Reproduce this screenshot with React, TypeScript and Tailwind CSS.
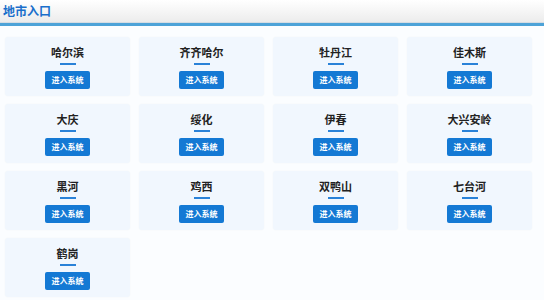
import React from "react";

const cities = [
  "哈尔滨", "齐齐哈尔", "牡丹江", "佳木斯",
  "大庆", "绥化", "伊春", "大兴安岭",
  "黑河", "鸡西", "双鸭山", "七台河",
  "鹤岗",
];

export default function App() {
  return (
    <div
      className="w-[544px] h-[300px] bg-white overflow-hidden"
      style={{ fontFamily: '"Noto Sans CJK SC", "Noto Sans", sans-serif' }}
    >
      <div className="h-[22px] bg-gradient-to-b from-white to-[#ececec] flex items-center px-[3px] pb-[1px]">
        <span className="text-[12px] font-bold text-[#1a6fcb] leading-none">地市入口</span>
      </div>
      <div className="h-[1px] bg-[#d6dde3]" />
      <div className="h-[3px] bg-[#4da3d8]" />
      <div className="bg-[#fbfdff] pt-[11px] px-[5px] h-[275px]">
        <div className="grid grid-cols-[repeat(4,125px)] gap-x-[9px] gap-y-[8px]">
          {cities.map((c) => (
            <div
              key={c}
              className="h-[59px] bg-[#f1f7fe] rounded-[3px] flex flex-col items-center pt-[8px] shadow-[0_0_2px_rgba(0,0,0,0.04)]"
            >
              <div className="text-[11px] leading-[15px] font-bold text-[#222]">{c}</div>
              <div className="w-[16px] h-[2px] bg-[#2a82d8] mt-[3px]" />
              <div className="mt-[6px] w-[45px] h-[18px] bg-[#1479d4] rounded-[2px] flex items-center justify-center text-white text-[8px] font-bold leading-none">
                进入系统
              </div>
            </div>
          ))}
        </div>
      </div>
    </div>
  );
}
